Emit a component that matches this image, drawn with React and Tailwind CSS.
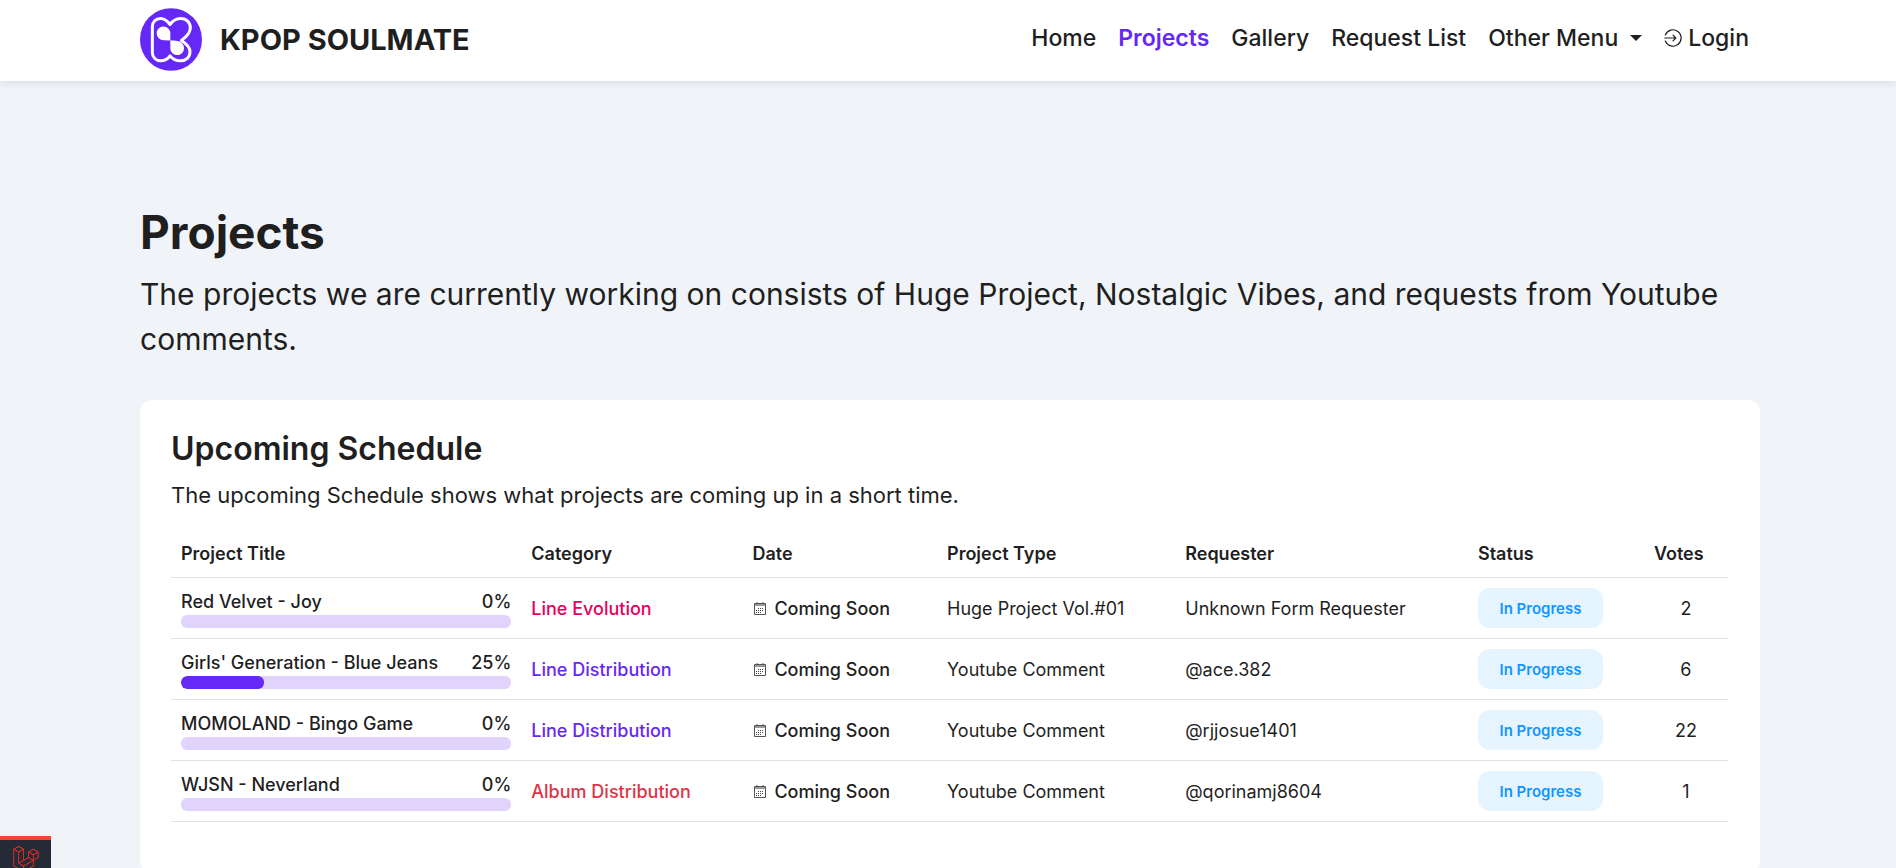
import { SiLaravel } from "react-icons/si";

const schedule = [
  { title: "Red Velvet - Joy", progress: 0, category: "Line Evolution", tone: "text-[#e6005c]", type: "Huge Project Vol.#01", requester: "Unknown Form Requester", votes: 2 },
  { title: "Girls' Generation - Blue Jeans", progress: 25, category: "Line Distribution", tone: "text-[#6528f7]", type: "Youtube Comment", requester: "@ace.382", votes: 6 },
  { title: "MOMOLAND - Bingo Game", progress: 0, category: "Line Distribution", tone: "text-[#6528f7]", type: "Youtube Comment", requester: "@rjjosue1401", votes: 22 },
  { title: "WJSN - Neverland", progress: 0, category: "Album Distribution", tone: "text-[#dc3545]", type: "Youtube Comment", requester: "@qorinamj8604", votes: 1 },
];

function Logo() {
  return (
    <svg viewBox="0 0 186 188" className="h-[63px] w-[62px] shrink-0" aria-hidden="true">
      <ellipse cx="93" cy="94" rx="93" ry="94" fill="#6528f7" />
      <path
        d="M37 56C37 41 48 31 61 31C75 31 82 38 90 49C98 38 107 31 122 31C139 31 151 43 151 59C151 76 140 86 124 97C140 107 150 116 150 131C150 147 138 158 122 158C108 158 98 153 90 143C83 153 75 158 62 158C48 158 37 148 37 133Z"
        fill="none" stroke="#fff" strokeWidth="9" strokeLinejoin="round"
      />
      <path d="M91 97V75A20.500 20.500 0 1 0 71 96Z" fill="#fff" />
      <path d="M91 97V120A20.500 20.500 0 1 0 124 104C118 98 108 97 91 97Z" fill="#fff" />
    </svg>
  );
}

function LoginIcon() {
  return (
    <svg viewBox="0 0 18 18" className="size-[18px]" fill="none" stroke="currentColor" strokeWidth="1.200" strokeLinecap="round" strokeLinejoin="round" aria-hidden="true">
      <path d="M1.300 6A8.200 8.200 0 1 1 1.300 12" />
      <path d="M.8 9H11.800M9 6.200L11.800 9L9 11.800" />
    </svg>
  );
}

function CalendarIcon() {
  return (
    <svg viewBox="0 0 12 13" className="h-[13px] w-3" fill="none" aria-hidden="true">
      <path d="M.5 1.500H11.500V12.500H.5Z" stroke="#555" />
      <path d="M1 2H11V4H1Z" fill="#999" />
      <path d="M3 0V2M9 0V2" stroke="#555" />
      <path d="M4 6.500H10M2 8.500H10M2 10.500H8" stroke="#444" strokeDasharray="1 1" />
    </svg>
  );
}

export default function App() {
  return (
    <div className="min-h-screen bg-[#f0f4f9] pb-10 font-['Inter',sans-serif] text-[#1f1f1f]">
      <header className="relative flex items-center justify-between bg-white pt-2 pr-[147px] pb-[10px] pl-[140px] shadow-[0_2px_8px_rgba(0,0,0,0.09)]">
        <a href="#" className="flex items-center gap-[18px] text-[29px] leading-9 font-bold">
          <Logo />
          KPOP SOULMATE
        </a>
        <nav className="flex items-center gap-[22px] pb-1 text-[23px] leading-8 font-medium">
          <a href="#home">Home</a>
          <a href="#projects" className="font-semibold text-[#6528f7]">Projects</a>
          <a href="#gallery">Gallery</a>
          <a href="#requests">Request List</a>
          <button type="button" className="flex items-center gap-3">
            Other Menu
            <svg viewBox="0 0 12 6" className="h-1.5 w-3" fill="currentColor" aria-hidden="true"><path d="M0 0H12L6 6Z" /></svg>
          </button>
          <a href="#login" className="flex items-center gap-1.5"><LoginIcon />Login</a>
        </nav>
      </header>

      <main className="pt-[123px] pr-[136px] pl-[140px]">
        <h1 className="text-[46px] leading-[56px] font-bold">Projects</h1>
        <p className="mt-3 text-[30px] leading-[45px]">
          The projects we are currently working on consists of Huge Project, Nostalgic Vibes, and requests from Youtube comments.
        </p>

        <section className="mt-[38px] rounded-xl bg-white px-8 pt-8 pb-[50px] pl-[31px]">
          <h2 className="text-[32px] leading-[34px] font-semibold">Upcoming Schedule</h2>
          <p className="mt-3 text-[22px] leading-[34px]">The upcoming Schedule shows what projects are coming up in a short time.</p>

          <table className="mt-[18px] w-full table-fixed text-left text-[18px] leading-[27px]">
            <colgroup>
              <col className="w-[22.5%]" />
              <col className="w-[14.2%]" />
              <col className="w-[12.5%]" />
              <col className="w-[15.3%]" />
              <col className="w-[18.8%]" />
              <col className="w-[11.3%]" />
              <col className="w-[5.4%]" />
            </colgroup>
            <thead>
              <tr className="border-b border-[#dee2e6] [&>th]:py-[10px] [&>th]:pl-[10px] [&>th]:font-semibold">
                <th>Project Title</th>
                <th>Category</th>
                <th>Date</th>
                <th>Project Type</th>
                <th>Requester</th>
                <th>Status</th>
                <th>Votes</th>
              </tr>
            </thead>
            <tbody>
              {schedule.map((row) => (
                <tr key={row.title} className="border-b border-[#dee2e6] [&>td]:px-[10px] [&>td]:py-[10px]">
                  <td className="font-medium">
                    <div className="flex justify-between">
                      <span>{row.title}</span>
                      <span>{row.progress}%</span>
                    </div>
                    <div className="h-[13px] overflow-hidden rounded-md bg-[#e0d4fd]">
                      <div className="h-full rounded-md bg-[#6528f7]" style={{ width: `${row.progress}%` }} />
                    </div>
                  </td>
                  <td className={`font-medium ${row.tone}`}>{row.category}</td>
                  <td className="font-medium">
                    <span className="flex items-center gap-2 pl-0.5"><CalendarIcon />Coming Soon</span>
                  </td>
                  <td>{row.type}</td>
                  <td>{row.requester}</td>
                  <td>
                    <span className="flex h-10 w-[125px] items-center justify-center rounded-xl bg-[#e6f4ff] text-[15px] font-semibold text-[#1296ff]">In Progress</span>
                  </td>
                  <td className="text-center">{row.votes}</td>
                </tr>
              ))}
            </tbody>
          </table>
        </section>
      </main>

      <button type="button" aria-label="Open debug bar" className="fixed bottom-0 left-0 flex h-8 w-[51px] justify-center overflow-hidden border-t-4 border-[#f4432f] bg-[#252a37] pt-1.5 text-[#ff2d20]">
        <SiLaravel className="size-[26px] shrink-0" />
      </button>
    </div>
  );
}
